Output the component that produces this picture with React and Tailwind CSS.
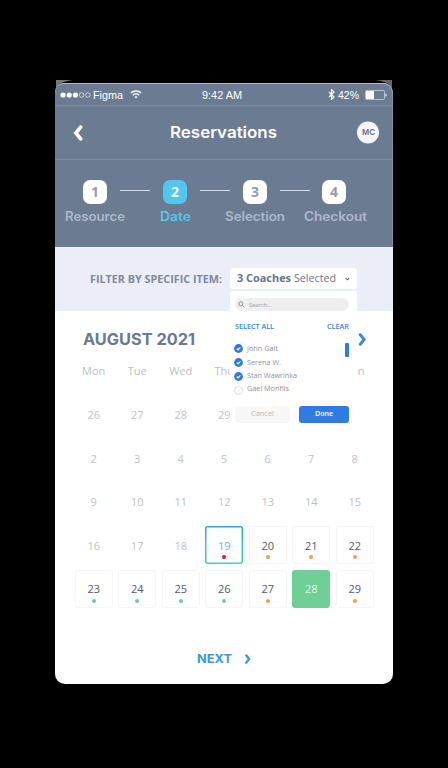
import React from "react";

const steps = ["Resource", "Date", "Selection", "Checkout"];
const labelWidths = [60, 31, 60, 63];

/* Cells that lie wholly under the open coach menu stay empty. */
const weekdays = ["Mon", "Tue", "Wed", "Thu", "", "", "Sun"];
const days = [
  26, 27, 28, 29, "", "", "",
  2, 3, 4, 5, 6, 7, 8,
  9, 10, 11, 12, 13, 14, 15,
  16, 17, 18, 19, 20, 21, 22,
  23, 24, 25, 26, 27, 28, 29,
];
const coaches = [
  { name: "John Galt", on: true, w: 31, h: "h-[14px]" },
  { name: "Serena W.", on: true, w: 34, h: "h-[14px]" },
  { name: "Stan Wawrinka", on: true, w: 50, h: "h-[13px]" },
  { name: "Gael Monfils", on: false, w: 42, h: "h-[13px]" },
];

/* One line of text set to an exact width on a baseline. */
function Label({ children, width, size, weight = 400, family = "Open Sans", className = "" }) {
  return (
    <svg className={"block shrink-0 overflow-visible " + className} width={width} height={size} aria-label={children}>
      <text
        x="0"
        y={size * 0.86}
        fill="currentColor"
        textLength={width}
        lengthAdjust="spacingAndGlyphs"
        style={{ fontFamily: `"${family}", sans-serif`, fontSize: size, fontWeight: weight }}
      >
        {children}
      </text>
    </svg>
  );
}

function Chevron({ className, width = 3.4, d = "M2.5 2l4.5 5.5L2.5 13" }) {
  return (
    <svg className={className} viewBox="0 0 9 15" fill="none" stroke="currentColor" strokeWidth={width} strokeLinecap="round" strokeLinejoin="miter">
      <path d={d} />
    </svg>
  );
}

function StatusBar() {
  return (
    <div className="flex h-[23px] items-center rounded-t-[9px] border-t border-b border-t-[#8cccd0] border-b-[#7e8ea6] text-white">
      <svg className="ml-[5px] h-[6px] w-[32px]" viewBox="0 0 32 6" fill="white">
        <circle cx="3" cy="3" r="2.6" />
        <circle cx="9.2" cy="3" r="2.6" />
        <circle cx="15.4" cy="3" r="2.6" />
        <g fill="none" stroke="white" strokeWidth=".6">
          <circle cx="21.6" cy="3" r="2.3" />
          <circle cx="27.8" cy="3" r="2.3" />
        </g>
      </svg>
      <Label width={30} size={11} family="Liberation Sans" className="ml-px translate-y-[0.5px]">Figma</Label>
      <svg className="ml-[7px] h-[9px] w-[12px]" viewBox="0 0 12 9" fill="none" stroke="white" strokeWidth="1.4">
        <path d="M.8 3.1C3.8.2 8.2.2 11.2 3.1" />
        <path d="M2.8 5.3c1.8-1.7 4.6-1.7 6.4 0" />
        <path d="M4.5 6.8c.9-.8 2.1-.8 3 0L6 8.6z" fill="white" stroke="none" />
      </svg>
      <Label width={40} size={11} family="Liberation Sans" className="ml-[60px] translate-y-[0.5px]">9:42 AM</Label>
      <svg className="ml-[86px] h-[11px] w-[7px]" viewBox="0 0 7 11" fill="none" stroke="white" strokeWidth="1.1">
        <path d="M1 3l5 5-2.5 2.4V.6L6 3 1 8" />
      </svg>
      <Label width={21} size={11} family="Liberation Sans" className="ml-[3px] translate-y-[0.5px]">42%</Label>
      <svg className="ml-[6px] h-[10px] w-[22px]" viewBox="0 0 22 10">
        <rect x=".5" y=".5" width="19" height="9" rx="1" fill="none" stroke="#cbd3de" strokeWidth=".8" />
        <rect x="1" y="1" width="8" height="8" fill="white" />
        <path d="M20.5 3.2c1.4.5 1.4 3.1 0 3.6z" fill="white" />
      </svg>
    </div>
  );
}

function TitleBar() {
  return (
    <div className="flex h-[54px] items-center border-b border-[#7e8ea6] text-white">
      <Chevron className="ml-[18px] h-[16px] w-[10px]" width={3.4} d="M7 2L2.5 7.5 7 13" />
      <Label width={107} size={16} weight={600} family="Inter" className="ml-[87px] -translate-y-px">Reservations</Label>
      <div className="mr-[13px] ml-auto flex size-[22px] -translate-y-[0.5px] items-center justify-center rounded-full bg-[#f5f5f8] text-[#657084]">
        <Label width={13} size={8} weight={600} family="Inter">MC</Label>
      </div>
    </div>
  );
}

function Steps() {
  return (
    <div className="h-[87px] pt-[20px]">
      <div className="flex items-start pl-[28px]">
        {steps.map((s, i) => (
          <React.Fragment key={s}>
            <div
              className={
                "flex size-[24px] shrink-0 items-center justify-center rounded-[7px] font-['Open_Sans',sans-serif] text-[14px] leading-none font-bold " +
                (i === 1 ? "bg-[#50c7ed] text-white" : "bg-white text-[#9b9b9f]") + (i === 3 ? " -ml-px" : "")
              }
            >
              {i + 1}
            </div>
            {i < 3 && <div className="mx-[13px] mt-[10px] h-px w-[30px] shrink-0 bg-[#d5dae2]" />}
          </React.Fragment>
        ))}
      </div>
      <div className="mt-[6px] grid w-[320px] grid-cols-4">
        {steps.map((s, i) => (
          <div key={s} className={"flex justify-center " + (i === 1 ? "text-[#55c6eb]" : "text-[#acb8cd]")}>
            <Label width={labelWidths[i]} size={12.5} weight={600} family="Inter">{s}</Label>
          </div>
        ))}
      </div>
    </div>
  );
}

function CoachMenu() {
  return (
    <div className="absolute top-[23px] left-0 z-10 flex h-[136px] w-[127px] flex-col rounded-[3px] bg-white pt-[7px] pr-[8px] pl-[5px]">
      <div className="flex h-[13px] items-center rounded-full bg-[#efefef] pl-[3px] text-[#98989c]">
        <svg className="size-[7px]" viewBox="0 0 7 7" fill="none" stroke="#88888d" strokeWidth=".9">
          <circle cx="2.8" cy="2.8" r="2" />
          <path d="M4.3 4.3l2 2" />
        </svg>
        <Label width={23} size={6} className="ml-[4px]">Search...</Label>
      </div>
      <div className="mt-[12px] flex justify-between text-[#3681e3]">
        <Label width={39} size={7.5} weight={600}>SELECT ALL</Label>
        <Label width={22} size={7.5} weight={600}>CLEAR</Label>
      </div>
      <div className="mt-[11px] flex justify-between">
        <ul className="h-[55px]">
          {coaches.map((c) => (
            <li key={c.name} className={"flex items-center text-[#8e9299] " + c.h}>
              <svg className={"mr-[4px] -ml-px size-[9px] " + (c.on ? "" : "translate-y-px")} viewBox="0 0 9 9" fill="none">
                {c.on ? (
                  <>
                    <circle cx="4.5" cy="4.5" r="4.4" fill="#2f78e0" />
                    <path d="M2.7 4.6l1.3 1.2 2.4-2.5" stroke="white" strokeWidth="1.2" />
                  </>
                ) : (
                  <circle cx="4.5" cy="4.5" r="4" stroke="#c8c8cc" strokeWidth=".7" fill="white" />
                )}
              </svg>
              <Label width={c.w} size={7.2} className={c.on ? "" : "-translate-y-[0.5px]"}>{c.name}</Label>
            </li>
          ))}
        </ul>
        <div className="mt-px h-[14px] w-[4px] rounded-[1px] bg-[#2f7be6]" />
      </div>
      <div className="mt-[9px] flex justify-between">
        <div className="flex h-[17px] w-[55px] items-center justify-center rounded-[3px] bg-[#f7f7f8] text-[#b9b9be]">
          <Label width={23} size={7.2}>Cancel</Label>
        </div>
        <div className="flex h-[17px] w-[50px] items-center justify-center rounded-[3px] bg-[#2f7be6] text-white">
          <Label width={18} size={7.2} weight={600}>Done</Label>
        </div>
      </div>
    </div>
  );
}

function Filter() {
  return (
    <div className="flex h-[64px] items-start bg-[#ebedf7] pt-[21px] pl-[35px]">
      <Label width={132} size={11} weight={700} className="mt-[6px] text-[#7f899b]">FILTER BY SPECIFIC ITEM:</Label>
      <div className="relative ml-[8px] flex h-[21px] w-[127px] items-center rounded-[3px] bg-white pl-[7px] text-[#68758c]">
        <Label width={54} size={11} weight={700}>3 Coaches</Label>
        <Label width={42} size={11} className="ml-[3px]">Selected</Label>
        <svg className="ml-[9px] h-[4px] w-[5px]" viewBox="0 0 5 4" fill="none" stroke="currentColor" strokeWidth="1.1">
          <path d="M.7 1l1.8 1.8L4.3 1" />
        </svg>
        <CoachMenu />
      </div>
    </div>
  );
}

function Day({ n, i }) {
  const bookable = i >= 21 + 3;
  const selected = i === 33;
  const today = i === 24;
  const dot = today ? "bg-[#e8131b]" : i <= 27 || i > 31 ? "bg-[#e9a050]" : "bg-[#6fc9a2]";
  let box = "border border-transparent text-[#bfc1c5]";
  if (bookable) box = "border border-[#f5f5f6] text-[#56595f]";
  if (today) box = "text-[#3fc6d8]";
  if (selected) box = "bg-[#70cf97] text-[#ddf8e7]";
  return (
    <div className="flex items-start justify-center pt-[2.5px]">
      <div className={"relative flex h-[38px] w-[38px] items-center justify-center rounded-[3px] font-['Open_Sans',sans-serif] text-[11px] leading-none " + box}>
        {today && (
          <svg className="absolute inset-0" width="38" height="38" fill="none">
            <defs>
              <linearGradient id="today" x1="0" y1="0" x2="0" y2="1">
                <stop offset="0" stopColor="#2ba6cf" />
                <stop offset=".5" stopColor="#38cad5" />
                <stop offset="1" stopColor="#43cda9" />
              </linearGradient>
            </defs>
            <rect x=".75" y=".75" width="36.5" height="36.5" rx="2" stroke="url(#today)" strokeWidth="1.5" />
          </svg>
        )}
        {n}
        {bookable && !selected && <i className={"absolute left-1/2 size-[4px] -translate-x-1/2 rounded-full " + (today ? "bottom-[5px] " : "bottom-[4px] ") + dot} />}
      </div>
    </div>
  );
}

function Calendar() {
  return (
    <div className="flex flex-col">
      <div className="flex h-[36px] items-end justify-between pr-[27px] pl-[28px]">
        <Label width={112} size={16} weight={700} family="Inter" className="text-[#6c7890]">AUGUST 2021</Label>
        <Chevron className="mb-px h-[13px] w-[8px] text-[#3b88dc]" />
      </div>
      <div className="mt-[12.5px] ml-[17px] grid w-[304.5px] grid-cols-7">
        {weekdays.map((d, i) => (
          <div key={i} className="flex h-[22px] items-center justify-center font-['Open_Sans',sans-serif] text-[11px] leading-none font-medium text-[#bcc0c6]">
            {d}
          </div>
        ))}
      </div>
      <div className="mt-[11.5px] ml-[17px] grid w-[304.5px] auto-rows-[43.5px] grid-cols-7">
        {days.map((n, i) => (
          <Day key={i} n={n} i={i} />
        ))}
      </div>
    </div>
  );
}

export default function App() {
  return (
    <div className="h-[768px] w-[448px] bg-black pt-[80px] pl-[55px]">
      <div className="h-[3px] w-[338px]">
        <div className="flex justify-between">
          <svg className="block h-[10px] w-[18px]" viewBox="0 0 18 10">
            <path d="M1 0h17C8 1 3 4 1 9z" fill="#777" />
          </svg>
          <svg className="block h-[10px] w-[18px]" viewBox="0 0 18 10">
            <path d="M17 0H0c10 1 15 4 17 9z" fill="#666" />
          </svg>
        </div>
      </div>
      <div className="relative h-[601px] w-[338px] rounded-[10px] bg-white">
        <div className="rounded-t-[10px] border-r border-[#8593aa] bg-[#6b7b92]">
          <StatusBar />
          <TitleBar />
          <Steps />
        </div>
        <Filter />
        <Calendar />
        <div className="mt-[42px] flex items-center pl-[142px] text-[#369bd6]">
          <Label width={35} size={12} weight={700} family="Inter">NEXT</Label>
          <Chevron className="ml-[12px] h-[10px] w-[7px]" />
        </div>
      </div>
    </div>
  );
}
